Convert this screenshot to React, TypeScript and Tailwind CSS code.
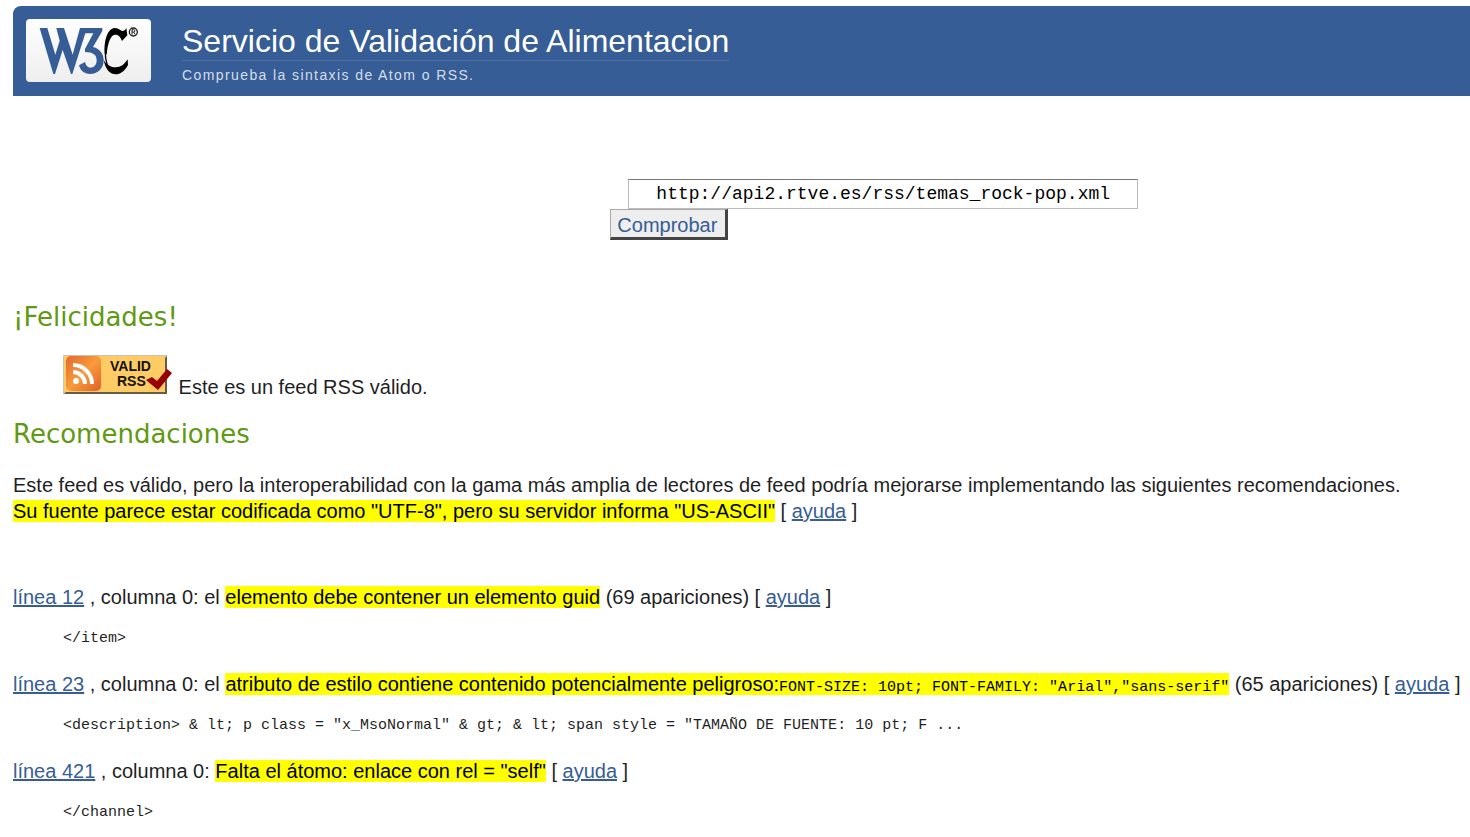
import type { ReactNode } from "react";

function W3CLogo() {
  return (
    <a
      href="#w3c"
      aria-label="W3C"
      className="block h-[63px] w-[125px] shrink-0 rounded-[4px] bg-gradient-to-b from-white to-[#eeeeee]"
    >
      <svg width="125" height="63" viewBox="80 59 375 189" aria-hidden="true">
        <path
          fill="#365d95"
          d="M121 86H144L168 166L181 124L171 86H194L220 166L242 86H309V95L281 143C303 148 313 166 313 183C313 208 295 224 272 224C254 224 243 213 239 198L257 188C260 200 265 205 273 205C285 205 292 196 292 183C292 167 281 158 257 158V149L282 102H258L219 224H215L190 152L167 224H162Z"
        />
        <path
          fill="#000"
          d="M316 165C313 115 328 86 347 86C358 86 364 95 370 95C375 95 378 91 381 86L384 108L368 125C364 114 358 106 348 106C335 106 325 128 322 165ZM313 182C322 197 335 204 349 204C365 204 375 195 385 180L386 197C377 214 364 225 349 225C330 225 318 208 313 182Z"
        />
        <path fill="none" stroke="#000" strokeWidth="4" d="M319 160C317 175 320 187 326 201" />
        <circle cx="402" cy="98" r="12" fill="none" stroke="#222" strokeWidth="4" />
        <path fill="none" stroke="#222" strokeWidth="3" d="M398 106V91H403C408 91 408 98 403 98H398M403 98L408 106" />
      </svg>
    </a>
  );
}

function ValidBadge() {
  return (
    <svg width="110" height="39" viewBox="0 0 110 39" role="img" aria-label="Valid RSS" className="inline-block align-baseline">
      <defs>
        <linearGradient id="feed" x1="0" y1="0" x2="1" y2="1">
          <stop offset="0" stopColor="#e2692c" />
          <stop offset="0.5" stopColor="#f99b3c" />
          <stop offset="1" stopColor="#df5f28" />
        </linearGradient>
      </defs>
      <rect width="104" height="39" fill="#c9c3b4" />
      <path d="M104 1V39H1L3 37H102V3Z" fill="#635c47" />
      <rect x="1" y="1" width="101" height="36" fill="#ffcb65" />
      <rect x="3" y="1" width="35" height="35" rx="5" fill="url(#feed)" />
      <circle cx="13" cy="26" r="3" fill="#fff" />
      <path d="M10 17a12 12 0 0 1 12 12M10 10a19 19 0 0 1 19 19" fill="none" stroke="#fff" strokeWidth="4" />
      <text x="47" y="16" fontSize="14" fontWeight="700" fontFamily="Liberation Sans, Arial, sans-serif" fill="#111">VALID</text>
      <text x="54" y="31" fontSize="14" fontWeight="700" fontFamily="Liberation Sans, Arial, sans-serif" fill="#111">RSS</text>
      <path d="M83 25L89 22L94 26L104 14L109 18L95 35Z" fill="#990000" />
    </svg>
  );
}

function Link({ children }: { children: ReactNode }) {
  return (
    <a href="#ayuda" className="text-[#365d95] underline">
      {children}
    </a>
  );
}

function Mark({ children }: { children: ReactNode }) {
  return <mark className="bg-[#ffff00] text-black">{children}</mark>;
}

function Help() {
  return (
    <>
      [ <Link>ayuda</Link> ]
    </>
  );
}

function Issue({ line, code, children }: { line: string; code: string; children: ReactNode }) {
  return (
    <li>
      <p>
        <Link>{line}</Link> , columna 0: {children} <Help />
      </p>
      <pre className="mt-4 pl-[50px] font-['Liberation_Mono',monospace] text-[15px] leading-[26px]">{code}</pre>
    </li>
  );
}

export default function App() {
  return (
    <div className="bg-white pt-1.5 pl-[13px] font-['Liberation_Sans',Arial,sans-serif] text-[20px] leading-[26px] text-[#1f1f26]">
      <header className="flex items-start gap-[31px] rounded-tl-lg bg-[#365d95] pt-[13px] pb-[11px] pl-[13px]">
        <W3CLogo />
        <div>
          <h1 className="border-b border-[#4e70a5] pt-1 text-[32px] leading-[37px] text-white">
            Servicio de Validación de Alimentacion
          </h1>
          <p className="pt-1 text-[14px] leading-[20px] tracking-widest text-[#d5deeb]">
            Comprueba la sintaxis de Atom o RSS.
          </p>
        </div>
      </header>
      <main>
        <form className="flex flex-col items-start pt-[83px] pl-[41%]" onSubmit={(e) => e.preventDefault()}>
          <input
            type="text"
            aria-label="Dirección"
            defaultValue="http://api2.rtve.es/rss/temas_rock-pop.xml"
            className="ml-[18px] h-[30px] w-[510px] border border-[#bbbbbb] border-t-[#777777] bg-white px-[27px] font-['Liberation_Mono',monospace] text-[18px] text-black outline-none"
          />
          <button
            type="submit"
            className="h-[31px] border border-r-[3px] border-b-[3px] border-[#aaaaaa] border-r-[#444444] border-b-[#444444] bg-[#eeeeee] pt-0.5 pr-2 pl-1.5 text-[20px] text-[#365d95]"
          >
            Comprobar
          </button>
        </form>

        <h2 className="mt-[61px] font-['DejaVu_Sans',Verdana,sans-serif] text-[26px] leading-[32px] text-[#609912]">
          ¡Felicidades!
        </h2>
        <p className="pt-[22px] pl-[50px]">
          <ValidBadge /> Este es un feed RSS válido.
        </p>

        <h2 className="mt-[18px] font-['DejaVu_Sans',Verdana,sans-serif] text-[26px] leading-[32px] text-[#609912]">
          Recomendaciones
        </h2>
        <p className="mt-[22px]">
          Este feed es válido, pero la interoperabilidad con la gama más amplia de lectores de feed podría mejorarse
          implementando las siguientes recomendaciones.
        </p>
        <p>
          <Mark>Su fuente parece estar codificada como "UTF-8", pero su servidor informa "US-ASCII"</Mark> <Help />
        </p>

        <ul className="mt-[60px] flex flex-col gap-[19px]">
          <Issue line="línea 12" code="</item>">
            el <Mark>elemento debe contener un elemento guid</Mark> (69 apariciones)
          </Issue>
          <Issue
            line="línea 23"
            code={'<description> & lt; p class = "x_MsoNormal" & gt; & lt; span style = "TAMAÑO DE FUENTE: 10 pt; F ...'}
          >
            el{" "}
            <Mark>
              atributo de estilo contiene contenido potencialmente peligroso:
              <code className="font-['Liberation_Mono',monospace] text-[15px] leading-none">
                FONT-SIZE: 10pt; FONT-FAMILY: "Arial","sans-serif"
              </code>
            </Mark>{" "}
            (65 apariciones)
          </Issue>
          <Issue line="línea 421" code="</channel>">
            <Mark>Falta el átomo: enlace con rel = "self"</Mark>
          </Issue>
        </ul>
      </main>
    </div>
  );
}
